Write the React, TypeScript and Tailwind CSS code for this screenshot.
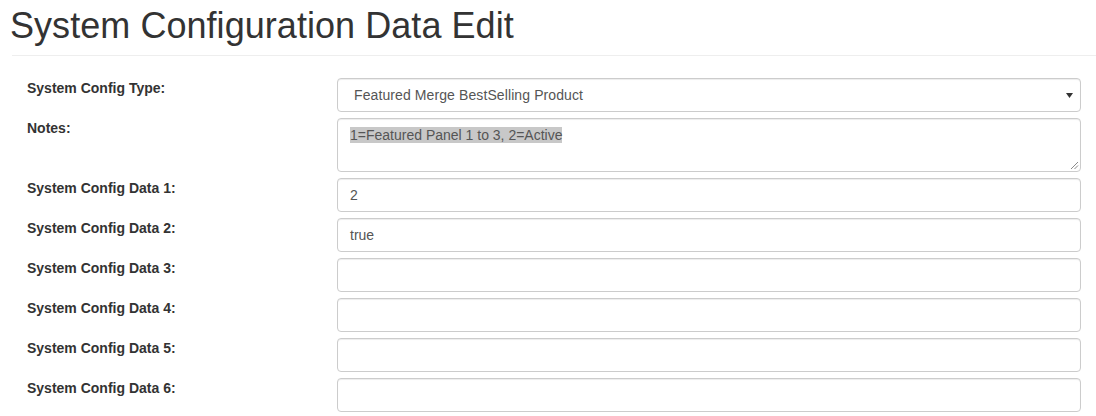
const dataRows: { label: string; value: string }[] = [
  { label: "System Config Data 1:", value: "2" },
  { label: "System Config Data 2:", value: "true" },
  { label: "System Config Data 3:", value: "" },
  { label: "System Config Data 4:", value: "" },
  { label: "System Config Data 5:", value: "" },
  { label: "System Config Data 6:", value: "" },
];

const controlBase =
  "w-full rounded-[4px] border border-[#cccccc] bg-white text-[14px] text-[#555555] shadow-[inset_0_1px_1px_rgba(0,0,0,0.075)]";

function FieldLabel({ children }: { children: React.ReactNode }) {
  return <label className="block text-[14px] font-bold leading-[20px] text-[#333333]">{children}</label>;
}

function ResizeGrip() {
  return (
    <svg className="absolute bottom-[1px] right-[1px]" width="9" height="9" viewBox="0 0 9 9">
      <path d="M8 1 L1 8 M8 4.5 L4.5 8" stroke="#8a8a8a" strokeWidth="1" />
    </svg>
  );
}

export default function App() {
  return (
    <div
      className="min-h-[416px] bg-white text-[#333333]"
      style={{ fontFamily: '"Liberation Sans", Arial, sans-serif' }}
    >
      {/* Page header */}
      <div className="ml-[12px] mt-[6px] border-b border-[#eeeeee] pb-[9px]">
        <h1 className="-ml-[2px] text-[36px] font-normal leading-[40px] tracking-[0.05px] text-[#333333]">
          System Configuration Data Edit
        </h1>
      </div>

      <form className="mt-[22px] flex flex-col gap-[6px] pl-[27px] pr-[15px]">
        <div className="grid grid-cols-[310px_1fr] items-start">
          <FieldLabel>System Config Type:</FieldLabel>
          <div className={`${controlBase} relative flex h-[34px] items-center pl-4`}>
            <span className="tracking-[0.1px]">Featured Merge BestSelling Product</span>
            <svg className="absolute right-[7px] top-[14px]" width="7" height="5" viewBox="0 0 7 5">
              <path d="M0 0 H7 L3.5 5 Z" fill="#333333" />
            </svg>
          </div>
        </div>

        <div className="grid grid-cols-[310px_1fr] items-start">
          <FieldLabel>Notes:</FieldLabel>
          <div className={`${controlBase} relative h-[54px] px-3 py-1.5 leading-[20px]`}>
            <span className="bg-[#c8c8c8]">1=Featured Panel 1 to 3, 2=Active</span>
            <ResizeGrip />
          </div>
        </div>

        {dataRows.map((row) => (
          <div key={row.label} className="grid grid-cols-[310px_1fr] items-start">
            <FieldLabel>{row.label}</FieldLabel>
            <div className={`${controlBase} flex h-[34px] items-center px-3`}>{row.value}</div>
          </div>
        ))}
      </form>
    </div>
  );
}
